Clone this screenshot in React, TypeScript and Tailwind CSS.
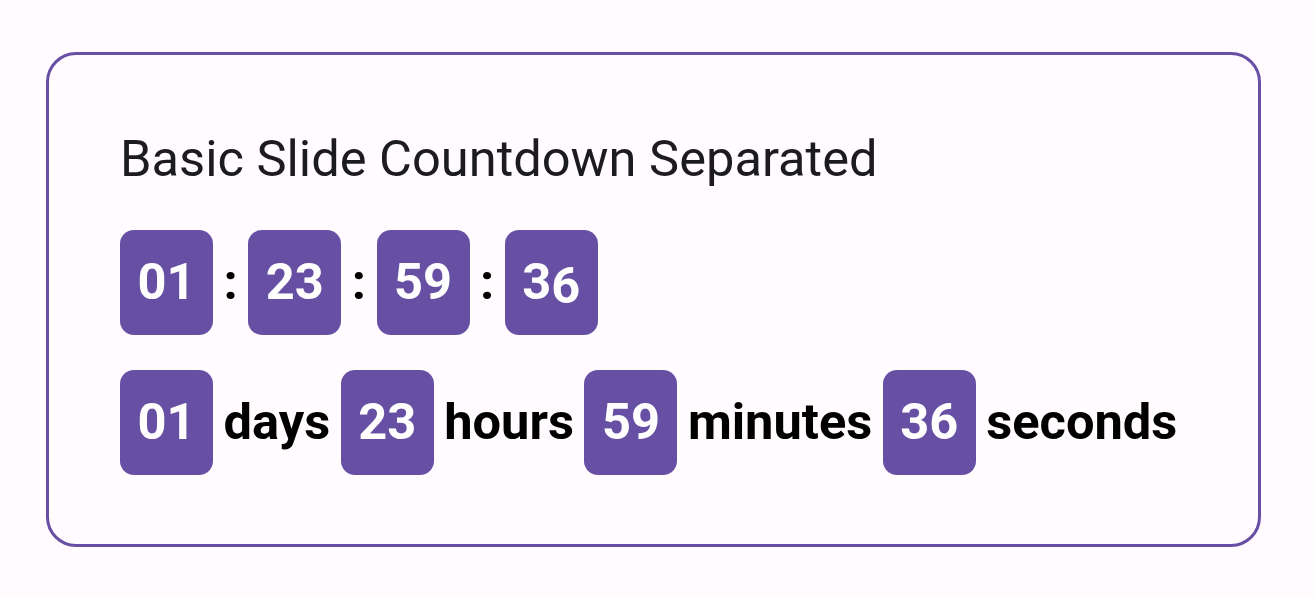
const font = { fontFamily: "Roboto, 'Liberation Sans', sans-serif" };

const Digit = ({ value, shift }: { value: string; shift?: boolean }) => (
  <div className="flex h-[105px] w-[93px] items-center justify-center rounded-[14px] bg-[#6750a4] text-[50.6px] font-bold leading-none text-white">
    {shift ? (
      <>
        {value[0]}
        <span className="translate-y-[4px]">{value[1]}</span>
      </>
    ) : (
      value
    )}
  </div>
);

const Label = ({ children }: { children: string }) => (
  <span className="text-[50.6px] font-bold leading-none text-black">{children}</span>
);

export default function App() {
  const parts = [
    { value: "01", label: "days" },
    { value: "23", label: "hours" },
    { value: "59", label: "minutes" },
    { value: "36", label: "seconds" },
  ];

  return (
    <div className="min-h-[598px] bg-[#fffbfe] pl-[46px] pr-[54px] pt-[52px]" style={font}>
      <div className="h-[495px] rounded-[30px] border-[3px] border-[#6750a4] pl-[71px] pt-[75px]">
        <h1 className="text-[50.6px] leading-[58px] font-normal text-[#1c1b1f]">
          Basic Slide Countdown Separated
        </h1>

        <div className="mt-[42px] flex items-center gap-[10.5px]">
          {parts.map((p, i) => (
            <div key={`sep-${p.label}`} className="flex items-center gap-[10.5px]">
              <Digit value={p.value} shift={i === 3} />
              {i < parts.length - 1 && <Label>:</Label>}
            </div>
          ))}
        </div>

        <div className="mt-[35px] flex items-center gap-[10.5px]">
          {parts.map((p) => (
            <div key={`lbl-${p.label}`} className="flex items-center gap-[10.5px]">
              <Digit value={p.value} />
              <Label>{p.label}</Label>
            </div>
          ))}
        </div>
      </div>
    </div>
  );
}
